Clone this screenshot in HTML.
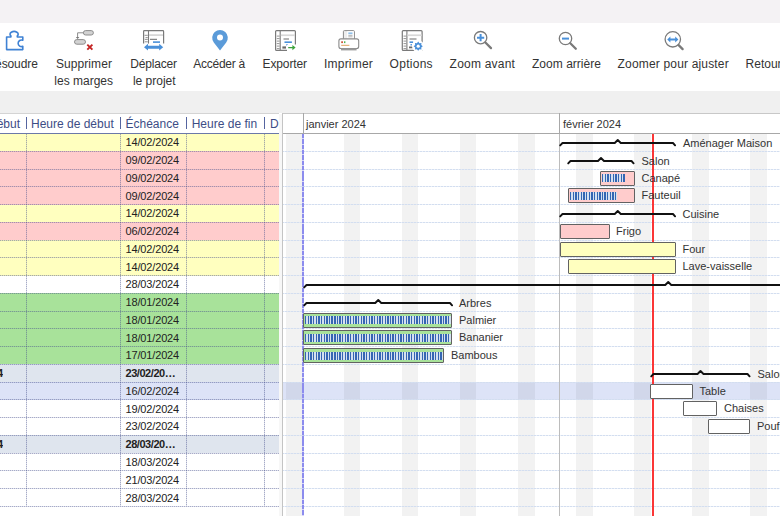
<!DOCTYPE html><html><head><meta charset="utf-8"><style>
*{margin:0;padding:0;box-sizing:border-box}
html,body{width:780px;height:516px;overflow:hidden;background:#fff}
body{position:relative;font-family:"Liberation Sans",sans-serif;color:#333}
.a{position:absolute}
.tb{position:absolute;font-size:12px;line-height:14px;color:#333;white-space:nowrap}
.hd{position:absolute;font-size:12px;line-height:14px;color:#3d4d85;white-space:nowrap}
.dt{position:absolute;font-size:11px;line-height:13px;color:#222;white-space:nowrap;letter-spacing:-0.15px}
.lb{position:absolute;font-size:11px;line-height:13px;color:#333;white-space:nowrap}
.hdash{background:repeating-linear-gradient(90deg,rgba(70,80,140,.48) 0,rgba(70,80,140,.48) 1px,rgba(70,80,140,.18) 1px,rgba(70,80,140,.18) 2px)}
.vdash{background:repeating-linear-gradient(180deg,rgba(70,80,140,.48) 0,rgba(70,80,140,.48) 1px,rgba(70,80,140,.18) 1px,rgba(70,80,140,.18) 2px)}
.cdash{background:repeating-linear-gradient(90deg,#d3def0 0,#d3def0 2px,rgba(211,222,240,.45) 2px,rgba(211,222,240,.45) 3px)}
.pdash{background:repeating-linear-gradient(180deg,#8c8cee 0,#8c8cee 4.4px,rgba(140,140,238,.35) 4.4px,rgba(140,140,238,.35) 5.3px)}
.bar{position:absolute;border:1px solid #626262;border-radius:1px}
.prog{position:absolute;background:repeating-linear-gradient(90deg,#3566b2 0,#3566b2 1.35px,#d4e0f0 1.35px,#d4e0f0 2.65px)}
</style></head><body><div class="a" style="left:0;top:0;width:780px;height:23px;background:#f4f2f4"></div>
<div class="a" style="left:0;top:91px;width:780px;height:21.5px;background:#f0f0f0"></div>
<div class="a" style="left:0;top:113px;width:278.5px;height:1px;background:#d4d4d4"></div>
<svg class="a" style="left:0;top:0" width="780" height="91" viewBox="0 0 780 91"><path d="M6.6,37 H10.9 V35.9 A4.1,2.7 0 1 1 17.3,35.9 V37 H22.8 V40.3 A3.3,3.3 0 1 0 22.8,46.3 V49.6 H6.6 Z" fill="none" stroke="#3f82d4" stroke-width="1.6" stroke-linejoin="round"/><rect x="83.4" y="30.6" width="10" height="4.4" rx="2.2" fill="#d2d2d2" stroke="#8c8c8c" stroke-width="1"/><rect x="74.5" y="39.6" width="11" height="4.6" rx="2.3" fill="#d2d2d2" stroke="#8c8c8c" stroke-width="1"/><path d="M83.4,32.8 H77.6 V37.2" fill="none" stroke="#8c8c8c" stroke-width="1"/><path d="M75.8,37 H79.4 L77.6,39 Z" fill="#777"/><path d="M87.3,44.6 L92.4,49.7 M92.4,44.6 L87.3,49.7" stroke="#c42424" stroke-width="1.9"/><path d="M143.6,43.6 V31.4 Q143.6,30.6 144.4,30.6 H162.8 Q163.6,30.6 163.6,31.4 V43.6" fill="none" stroke="#7a7a7a" stroke-width="1.2"/><path d="M148.5,30.6 V43.6" stroke="#7a7a7a" stroke-width="1.1"/><rect x="149" y="34.2" width="14" height="1.8" fill="#d8d8d8"/><path d="M144.5,35.3 H147.8 M145.5,37.6 H147.8 M144.8,39.4 H147.8 M144.8,41.8 H147.8" stroke="#888" stroke-width="0.9"/><path d="M150,39.3 H157" stroke="#6a6a6a" stroke-width="1"/><rect x="153" y="41.3" width="7" height="1.6" fill="#4a90d9"/><path d="M144,47.2 L148,43.8 V45.7 H159.2 V43.8 L163.2,47.2 L159.2,50.6 V48.7 H148 V50.6 Z" fill="#4a90d9"/><path d="M220,50.6 L213.8,42.55 A7.8,7.8 0 1 1 226.2,42.55 Z" fill="#5b9bd9"/><circle cx="220" cy="37.6" r="3" fill="#fff"/><rect x="275.6" y="30.6" width="19.8" height="19.8" rx="1" fill="#fff" stroke="#7a7a7a" stroke-width="1.2"/><path d="M280.20000000000005,30.6 V50.400000000000006" stroke="#7a7a7a" stroke-width="1.1"/><rect x="280.8" y="34.4" width="14.200000000000001" height="1.7" fill="#d8d8d8"/><path d="M276.8,36.1 H279.6" stroke="#8a8a8a" stroke-width="0.9"/><path d="M276.8,38.6 H279.6" stroke="#8a8a8a" stroke-width="0.9"/><path d="M276.8,41.1 H279.6" stroke="#8a8a8a" stroke-width="0.9"/><path d="M276.8,43.6 H279.6" stroke="#8a8a8a" stroke-width="0.9"/><path d="M276.8,46.1 H279.6" stroke="#8a8a8a" stroke-width="0.9"/><path d="M276.8,48.6 H279.6" stroke="#8a8a8a" stroke-width="0.9"/><path d="M283.5,39 H289" stroke="#6a6a6a" stroke-width="1"/><rect x="284.5" y="41.4" width="7.4" height="1.6" fill="#4a90d9"/><rect x="286.4" y="44" width="1.6" height="1.6" fill="#4a90d9"/><rect x="282.4" y="46.4" width="3.6" height="2.2" fill="#6a6a6a"/><rect x="287" y="44.5" width="9" height="6.5" fill="#fff"/><path d="M288.2,46.9 H292.4 V45 L295.6,47.6 L292.4,50.2 V48.3 H288.2 Z" fill="#3da33d"/><rect x="343.4" y="30.6" width="11" height="9" rx="1" fill="#eeeeee" stroke="#8a8a8a" stroke-width="1"/><rect x="347.2" y="31.2" width="6.6" height="7.8" fill="#fff"/><rect x="348.3" y="32.4" width="4.2" height="1.8" fill="#8fc0ea"/><path d="M348.3,35.4 H352.5 M348.3,36.8 H352.5" stroke="#999" stroke-width="0.7"/><rect x="338.9" y="38.9" width="19.8" height="9.6" rx="2" fill="#fff" stroke="#8a8a8a" stroke-width="1.1"/><rect x="341" y="48.4" width="15.6" height="2" fill="#9a9a9a"/><rect x="341.2" y="41.3" width="1.8" height="1.8" fill="#d2553a"/><rect x="344" y="41.3" width="1.4" height="1.8" fill="#4fb04f"/><path d="M341.2,45.3 H349.4" stroke="#e0a060" stroke-width="1"/><rect x="402.3" y="30.6" width="19.8" height="19.8" rx="1" fill="#fff" stroke="#7a7a7a" stroke-width="1.2"/><path d="M406.90000000000003,30.6 V50.400000000000006" stroke="#7a7a7a" stroke-width="1.1"/><rect x="407.5" y="34.4" width="14.200000000000001" height="1.7" fill="#d8d8d8"/><path d="M403.5,36.1 H406.3" stroke="#8a8a8a" stroke-width="0.9"/><path d="M403.5,38.6 H406.3" stroke="#8a8a8a" stroke-width="0.9"/><path d="M403.5,41.1 H406.3" stroke="#8a8a8a" stroke-width="0.9"/><path d="M403.5,43.6 H406.3" stroke="#8a8a8a" stroke-width="0.9"/><path d="M403.5,46.1 H406.3" stroke="#8a8a8a" stroke-width="0.9"/><path d="M403.5,48.6 H406.3" stroke="#8a8a8a" stroke-width="0.9"/><path d="M409.5,39 H416.5" stroke="#6a6a6a" stroke-width="1"/><rect x="409.5" y="41.4" width="3.6" height="1.6" fill="#4a90d9"/><rect x="410.5" y="44" width="1.4" height="1.5" fill="#4a90d9"/><rect x="409" y="46.5" width="3.6" height="1.8" fill="#6a6a6a"/><circle cx="418.2" cy="46.2" r="6" fill="#fff"/><polygon points="422.80,46.20 421.25,47.46 421.45,49.45 419.46,49.25 418.20,50.80 416.94,49.25 414.95,49.45 415.15,47.46 413.60,46.20 415.15,44.94 414.95,42.95 416.94,43.15 418.20,41.60 419.46,43.15 421.45,42.95 421.25,44.94" fill="#4a90d9"/><circle cx="418.2" cy="46.2" r="1.6" fill="#fff"/><circle cx="480.6" cy="37.7" r="6.2" fill="none" stroke="#7a7a7a" stroke-width="1.3"/><path d="M485.4,42.5 L491,48.1" stroke="#7a7a7a" stroke-width="2.3" stroke-linecap="round"/><path d="M477,37.7 H484.2 M480.6,34.1 V41.3" stroke="#4a90d9" stroke-width="2"/><circle cx="565.5" cy="38.5" r="6.2" fill="none" stroke="#7a7a7a" stroke-width="1.3"/><path d="M570.3,43.3 L575.8,48.7" stroke="#7a7a7a" stroke-width="2.3" stroke-linecap="round"/><path d="M562,38.6 H569" stroke="#4a90d9" stroke-width="2"/><circle cx="672.8" cy="39.3" r="7.7" fill="none" stroke="#7a7a7a" stroke-width="1.3"/><path d="M678.6,45.1 L682.6,49.1" stroke="#7a7a7a" stroke-width="2.3" stroke-linecap="round"/><path d="M667.2,39.5 L670.4,36.6 V38.6 H675.2 V36.6 L678.4,39.5 L675.2,42.4 V40.4 H670.4 V42.4 Z" fill="#4a90d9"/></svg>
<div class="tb" style="left:-13.5px;top:57.4px;letter-spacing:-0.100px">Résoudre</div>
<div class="tb" style="left:56px;top:57.4px;letter-spacing:0.067px">Supprimer</div>
<div class="tb" style="left:36px;top:73.8px;width:95.4px;text-align:center">les marges</div>
<div class="tb" style="left:130.3px;top:57.4px;letter-spacing:-0.200px">Déplacer</div>
<div class="tb" style="left:110.3px;top:73.8px;width:88px;text-align:center">le projet</div>
<div class="tb" style="left:193.3px;top:57.4px;letter-spacing:-0.256px">Accéder à</div>
<div class="tb" style="left:262.5px;top:57.4px;letter-spacing:-0.112px">Exporter</div>
<div class="tb" style="left:324px;top:57.4px;letter-spacing:0.213px">Imprimer</div>
<div class="tb" style="left:389.6px;top:57.4px;letter-spacing:0.271px">Options</div>
<div class="tb" style="left:449.6px;top:57.4px;letter-spacing:0.220px">Zoom avant</div>
<div class="tb" style="left:532px;top:57.4px;letter-spacing:0.025px">Zoom arrière</div>
<div class="tb" style="left:617.6px;top:57.4px;letter-spacing:0.168px">Zoomer pour ajuster</div>
<div class="tb" style="left:745.6px;top:57.4px;letter-spacing:0.000px">Retour à</div>
<div class="a" style="left:0;top:133.5px;width:278.5px;height:17.76px;background:#ffffbf"></div>
<div class="dt" style="left:125.5px;top:136.3px;">14/02/2024</div>
<div class="a" style="left:0;top:151.26px;width:278.5px;height:17.76px;background:#ffcccc"></div>
<div class="dt" style="left:125.5px;top:154.06px;">09/02/2024</div>
<div class="a" style="left:0;top:169.02px;width:278.5px;height:17.76px;background:#ffcccc"></div>
<div class="dt" style="left:125.5px;top:171.82px;">09/02/2024</div>
<div class="a" style="left:0;top:186.78px;width:278.5px;height:17.76px;background:#ffcccc"></div>
<div class="dt" style="left:125.5px;top:189.58px;">09/02/2024</div>
<div class="a" style="left:0;top:204.54px;width:278.5px;height:17.76px;background:#ffffbf"></div>
<div class="dt" style="left:125.5px;top:207.34px;">14/02/2024</div>
<div class="a" style="left:0;top:222.3px;width:278.5px;height:17.76px;background:#ffcccc"></div>
<div class="dt" style="left:125.5px;top:225.1px;">06/02/2024</div>
<div class="a" style="left:0;top:240.06px;width:278.5px;height:17.76px;background:#ffffbf"></div>
<div class="dt" style="left:125.5px;top:242.86px;">14/02/2024</div>
<div class="a" style="left:0;top:257.82px;width:278.5px;height:17.76px;background:#ffffbf"></div>
<div class="dt" style="left:125.5px;top:260.62px;">14/02/2024</div>
<div class="a" style="left:0;top:275.58px;width:278.5px;height:17.76px;background:#ffffff"></div>
<div class="dt" style="left:125.5px;top:278.38px;">28/03/2024</div>
<div class="a" style="left:0;top:293.34px;width:278.5px;height:17.76px;background:#a8e29a"></div>
<div class="dt" style="left:125.5px;top:296.14px;">18/01/2024</div>
<div class="a" style="left:0;top:311.1px;width:278.5px;height:17.76px;background:#a8e29a"></div>
<div class="dt" style="left:125.5px;top:313.9px;">18/01/2024</div>
<div class="a" style="left:0;top:328.86px;width:278.5px;height:17.76px;background:#a8e29a"></div>
<div class="dt" style="left:125.5px;top:331.66px;">18/01/2024</div>
<div class="a" style="left:0;top:346.62px;width:278.5px;height:17.76px;background:#a8e29a"></div>
<div class="dt" style="left:125.5px;top:349.42px;">17/01/2024</div>
<div class="a" style="left:0;top:364.38px;width:278.5px;height:17.76px;background:#dfe5ee"></div>
<div class="dt" style="left:125.5px;top:367.18px;font-weight:bold;letter-spacing:-0.45px">23/02/20…</div>
<div class="dt" style="left:-40px;top:367.18px;font-weight:bold;width:43px;overflow:hidden;text-align:right">2024</div>
<div class="a" style="left:0;top:382.14px;width:278.5px;height:17.76px;background:#dde3f7"></div>
<div class="dt" style="left:125.5px;top:384.94px;">16/02/2024</div>
<div class="a" style="left:0;top:399.9px;width:278.5px;height:17.76px;background:#ffffff"></div>
<div class="dt" style="left:125.5px;top:402.7px;">19/02/2024</div>
<div class="a" style="left:0;top:417.66px;width:278.5px;height:17.76px;background:#ffffff"></div>
<div class="dt" style="left:125.5px;top:420.46px;">23/02/2024</div>
<div class="a" style="left:0;top:435.42px;width:278.5px;height:17.76px;background:#dfe5ee"></div>
<div class="dt" style="left:125.5px;top:438.22px;font-weight:bold;letter-spacing:-0.45px">28/03/20…</div>
<div class="dt" style="left:-40px;top:438.22px;font-weight:bold;width:43px;overflow:hidden;text-align:right">2024</div>
<div class="a" style="left:0;top:453.18px;width:278.5px;height:17.76px;background:#ffffff"></div>
<div class="dt" style="left:125.5px;top:455.98px;">18/03/2024</div>
<div class="a" style="left:0;top:470.94px;width:278.5px;height:17.76px;background:#ffffff"></div>
<div class="dt" style="left:125.5px;top:473.74px;">21/03/2024</div>
<div class="a" style="left:0;top:488.7px;width:278.5px;height:17.76px;background:#ffffff"></div>
<div class="dt" style="left:125.5px;top:491.5px;">28/03/2024</div>
<div class="a hdash" style="left:0;top:150.76px;width:278.5px;height:1px"></div>
<div class="a hdash" style="left:0;top:168.52px;width:278.5px;height:1px"></div>
<div class="a hdash" style="left:0;top:186.28px;width:278.5px;height:1px"></div>
<div class="a hdash" style="left:0;top:204.04px;width:278.5px;height:1px"></div>
<div class="a hdash" style="left:0;top:221.8px;width:278.5px;height:1px"></div>
<div class="a hdash" style="left:0;top:239.56px;width:278.5px;height:1px"></div>
<div class="a hdash" style="left:0;top:257.32px;width:278.5px;height:1px"></div>
<div class="a hdash" style="left:0;top:275.08px;width:278.5px;height:1px"></div>
<div class="a hdash" style="left:0;top:292.84px;width:278.5px;height:1px"></div>
<div class="a hdash" style="left:0;top:310.6px;width:278.5px;height:1px"></div>
<div class="a hdash" style="left:0;top:328.36px;width:278.5px;height:1px"></div>
<div class="a hdash" style="left:0;top:346.12px;width:278.5px;height:1px"></div>
<div class="a hdash" style="left:0;top:363.88px;width:278.5px;height:1px"></div>
<div class="a hdash" style="left:0;top:381.64px;width:278.5px;height:1px"></div>
<div class="a hdash" style="left:0;top:399.4px;width:278.5px;height:1px"></div>
<div class="a hdash" style="left:0;top:417.16px;width:278.5px;height:1px"></div>
<div class="a hdash" style="left:0;top:434.92px;width:278.5px;height:1px"></div>
<div class="a hdash" style="left:0;top:452.68px;width:278.5px;height:1px"></div>
<div class="a hdash" style="left:0;top:470.44px;width:278.5px;height:1px"></div>
<div class="a hdash" style="left:0;top:488.2px;width:278.5px;height:1px"></div>
<div class="a hdash" style="left:0;top:505.96px;width:278.5px;height:1px"></div>
<div class="a vdash" style="left:26px;top:133.5px;width:1px;height:372.96px"></div>
<div class="a vdash" style="left:120px;top:133.5px;width:1px;height:372.96px"></div>
<div class="a vdash" style="left:186px;top:133.5px;width:1px;height:372.96px"></div>
<div class="a vdash" style="left:264px;top:133.5px;width:1px;height:372.96px"></div>
<div class="a" style="left:0;top:133px;width:278.5px;height:1px;background:#6b78a8"></div>
<div class="hd" style="left:-12px;top:116.5px">Début</div>
<div class="hd" style="left:31px;top:116.5px">Heure de début</div>
<div class="hd" style="left:125.5px;top:116.5px">Échéance</div>
<div class="hd" style="left:191.7px;top:116.5px">Heure de fin</div>
<div class="hd" style="left:270px;top:116.5px">Durée</div>
<div class="a" style="left:26px;top:117px;width:1px;height:12px;background:#5565a0"></div>
<div class="a" style="left:120px;top:117px;width:1px;height:12px;background:#5565a0"></div>
<div class="a" style="left:186px;top:117px;width:1px;height:12px;background:#5565a0"></div>
<div class="a" style="left:264px;top:117px;width:1px;height:12px;background:#5565a0"></div>
<div class="a" style="left:278.5px;top:113.5px;width:4px;height:403px;background:#f7f7f7"></div>
<div class="a" style="left:282px;top:113px;width:498px;height:403px;overflow:hidden" id="chart">
<div class="a" style="left:0;top:269.14px;width:500px;height:17.76px;background:#dde3f7"></div>
<div class="a" style="left:3.82px;top:21px;width:16.58px;height:400px;background:rgba(0,0,0,.051)"></div>
<div class="a" style="left:61.85px;top:21px;width:16.58px;height:400px;background:rgba(0,0,0,.051)"></div>
<div class="a" style="left:119.88px;top:21px;width:16.58px;height:400px;background:rgba(0,0,0,.051)"></div>
<div class="a" style="left:177.91px;top:21px;width:16.58px;height:400px;background:rgba(0,0,0,.051)"></div>
<div class="a" style="left:235.94px;top:21px;width:16.58px;height:400px;background:rgba(0,0,0,.051)"></div>
<div class="a" style="left:293.97px;top:21px;width:16.58px;height:400px;background:rgba(0,0,0,.051)"></div>
<div class="a" style="left:352px;top:21px;width:16.58px;height:400px;background:rgba(0,0,0,.051)"></div>
<div class="a" style="left:410.03px;top:21px;width:16.58px;height:400px;background:rgba(0,0,0,.051)"></div>
<div class="a" style="left:468.06px;top:21px;width:16.58px;height:400px;background:rgba(0,0,0,.051)"></div>
<div class="a cdash" style="left:0;top:37.76px;width:500px;height:1px"></div>
<div class="a cdash" style="left:0;top:55.52px;width:500px;height:1px"></div>
<div class="a cdash" style="left:0;top:73.28px;width:500px;height:1px"></div>
<div class="a cdash" style="left:0;top:91.04px;width:500px;height:1px"></div>
<div class="a cdash" style="left:0;top:108.8px;width:500px;height:1px"></div>
<div class="a cdash" style="left:0;top:126.56px;width:500px;height:1px"></div>
<div class="a cdash" style="left:0;top:144.32px;width:500px;height:1px"></div>
<div class="a cdash" style="left:0;top:162.08px;width:500px;height:1px"></div>
<div class="a cdash" style="left:0;top:179.84px;width:500px;height:1px"></div>
<div class="a cdash" style="left:0;top:197.6px;width:500px;height:1px"></div>
<div class="a cdash" style="left:0;top:215.36px;width:500px;height:1px"></div>
<div class="a cdash" style="left:0;top:233.12px;width:500px;height:1px"></div>
<div class="a cdash" style="left:0;top:250.88px;width:500px;height:1px"></div>
<div class="a cdash" style="left:0;top:268.64px;width:500px;height:1px"></div>
<div class="a cdash" style="left:0;top:286.4px;width:500px;height:1px"></div>
<div class="a cdash" style="left:0;top:304.16px;width:500px;height:1px"></div>
<div class="a cdash" style="left:0;top:321.92px;width:500px;height:1px"></div>
<div class="a cdash" style="left:0;top:339.68px;width:500px;height:1px"></div>
<div class="a cdash" style="left:0;top:357.44px;width:500px;height:1px"></div>
<div class="a cdash" style="left:0;top:375.2px;width:500px;height:1px"></div>
<div class="a cdash" style="left:0;top:392.96px;width:500px;height:1px"></div>
<div class="a cdash" style="left:0;top:410.72px;width:500px;height:1px"></div>
<div class="a" style="left:0;top:0;width:500px;height:21px;background:#fff;border-top:1px solid #c8c8c8;border-bottom:1px solid #a8a8a8"></div>
<div class="a" style="left:20.6px;top:0;width:1px;height:21px;background:#a8a8a8"></div>
<div class="a" style="left:277.4px;top:0;width:1px;height:21px;background:#a8a8a8"></div>
<div class="a" style="left:277.4px;top:21px;width:1px;height:403px;background:#bcbcbc"></div>
<div class="lb" style="left:24px;top:4.5px">janvier 2024</div>
<div class="lb" style="left:281px;top:4.5px">février 2024</div>
<div class="a" style="left:0;top:0;width:1px;height:403px;background:#c4c4c4"></div>
<div class="a pdash" style="left:20px;top:21px;width:2px;height:383px"></div>
<div class="a" style="left:370px;top:21px;width:2px;height:383px;background:#fb3636"></div>
<svg class="a" style="left:276px;top:23.88px;overflow:visible" width="119.5" height="12" viewBox="0 0 119.5 12"><path d="M2.2 8.4 L4.5 6 L56.75 6 L59.75 3 L62.75 6 L115 6 L117.1 8.3" fill="none" stroke="#111" stroke-width="1.9" stroke-linejoin="round" stroke-linecap="round"/></svg>
<div class="lb" style="left:401px;top:23.98px">Aménager Maison</div>
<svg class="a" style="left:284px;top:41.64px;overflow:visible" width="70" height="12" viewBox="0 0 70 12"><path d="M2.2 8.4 L4.5 6 L32 6 L35 3 L38 6 L65.5 6 L67.6 8.3" fill="none" stroke="#111" stroke-width="1.9" stroke-linejoin="round" stroke-linecap="round"/></svg>
<div class="lb" style="left:359.5px;top:41.74px">Salon</div>
<div class="bar" style="left:318.3px;top:57.52px;width:34.7px;height:15px;background:#ffcccc"></div>
<div class="prog" style="left:319.8px;top:61.02px;width:23.7px;height:8px"></div>
<div class="lb" style="left:359.5px;top:58.52px">Canapé</div>
<div class="bar" style="left:286.3px;top:75.28px;width:66.7px;height:15px;background:#ffcccc"></div>
<div class="prog" style="left:287.8px;top:78.78px;width:47.7px;height:8px"></div>
<div class="lb" style="left:359.5px;top:76.28px">Fauteuil</div>
<svg class="a" style="left:276px;top:94.92px;overflow:visible" width="119.5" height="12" viewBox="0 0 119.5 12"><path d="M2.2 8.4 L4.5 6 L56.75 6 L59.75 3 L62.75 6 L115 6 L117.1 8.3" fill="none" stroke="#111" stroke-width="1.9" stroke-linejoin="round" stroke-linecap="round"/></svg>
<div class="lb" style="left:400.5px;top:95.02px">Cuisine</div>
<div class="bar" style="left:278px;top:110.8px;width:49.5px;height:15px;background:#ffcccc"></div>
<div class="lb" style="left:334px;top:111.8px">Frigo</div>
<div class="bar" style="left:278px;top:128.56px;width:116px;height:15px;background:#ffffbf"></div>
<div class="lb" style="left:400.5px;top:129.56px">Four</div>
<div class="bar" style="left:286.3px;top:146.32px;width:107.7px;height:15px;background:#ffffbf"></div>
<div class="lb" style="left:400.5px;top:147.32px">Lave-vaisselle</div>
<svg class="a" style="left:19.5px;top:165.96px;overflow:visible" width="732.5" height="12" viewBox="0 0 732.5 12"><path d="M2.2 8.4 L4.5 6 L363.25 6 L366.25 3 L369.25 6 L728 6 L730.1 8.3" fill="none" stroke="#111" stroke-width="1.9" stroke-linejoin="round" stroke-linecap="round"/></svg>
<svg class="a" style="left:19.5px;top:183.72px;overflow:visible" width="152.5" height="12" viewBox="0 0 152.5 12"><path d="M2.2 8.4 L4.5 6 L73.25 6 L76.25 3 L79.25 6 L148 6 L150.1 8.3" fill="none" stroke="#111" stroke-width="1.9" stroke-linejoin="round" stroke-linecap="round"/></svg>
<div class="lb" style="left:177px;top:183.82px">Arbres</div>
<div class="bar" style="left:21.3px;top:199.6px;width:148.7px;height:15px;background:#a8e29a"></div>
<div class="prog" style="left:22.8px;top:203.1px;width:146.2px;height:8px"></div>
<div class="lb" style="left:177px;top:200.6px">Palmier</div>
<div class="bar" style="left:21.3px;top:217.36px;width:148.7px;height:15px;background:#a8e29a"></div>
<div class="prog" style="left:22.8px;top:220.86px;width:146.2px;height:8px"></div>
<div class="lb" style="left:177px;top:218.36px">Bananier</div>
<div class="bar" style="left:21.3px;top:235.12px;width:140.7px;height:15px;background:#a8e29a"></div>
<div class="prog" style="left:22.8px;top:238.62px;width:138.2px;height:8px"></div>
<div class="lb" style="left:169px;top:236.12px">Bambous</div>
<svg class="a" style="left:366.5px;top:254.76px;overflow:visible" width="103" height="12" viewBox="0 0 103 12"><path d="M2.2 8.4 L4.5 6 L48.5 6 L51.5 3 L54.5 6 L98.5 6 L100.6 8.3" fill="none" stroke="#111" stroke-width="1.9" stroke-linejoin="round" stroke-linecap="round"/></svg>
<div class="lb" style="left:475.5px;top:254.86px">Salon</div>
<div class="bar" style="left:368.2px;top:270.64px;width:42.4px;height:15px;background:#ffffff"></div>
<div class="lb" style="left:417.5px;top:271.64px">Table</div>
<div class="bar" style="left:401.1px;top:288.4px;width:34.1px;height:15px;background:#ffffff"></div>
<div class="lb" style="left:442px;top:289.4px">Chaises</div>
<div class="bar" style="left:426.2px;top:306.16px;width:41.8px;height:15px;background:#ffffff"></div>
<div class="lb" style="left:475px;top:307.16px">Pouf</div>
</div></body></html>
